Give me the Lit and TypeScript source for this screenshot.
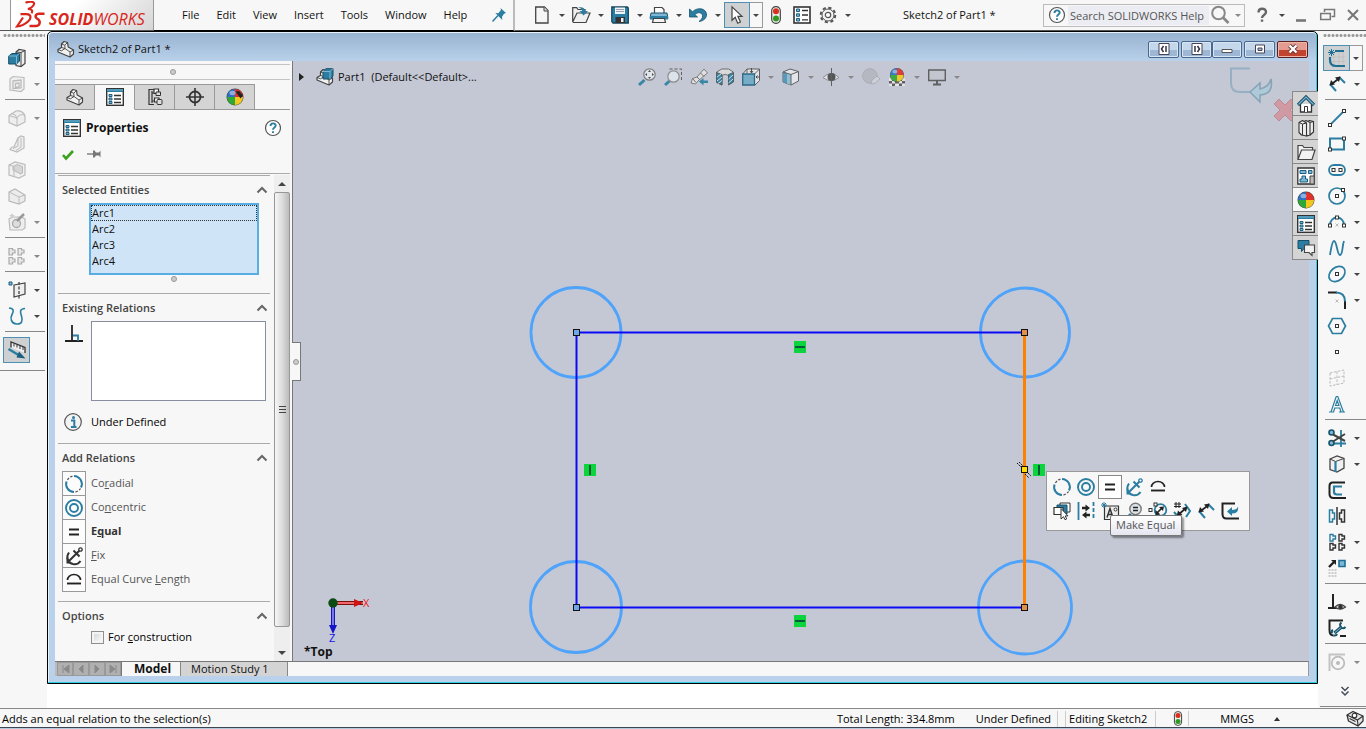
import { LitElement, html, css, svg, nothing } from "lit";
import { customElement, state } from "lit/decorators.js";
import { classMap } from "lit/directives/class-map.js";

const T = "#2b7ea1";
const L = "#7db7d3";
const K = "#333";

const ball = svg`
  <circle cx="9" cy="9" r="8.5" fill="#444"/>
  <path d="M9 9V1A8 8 0 0 0 1 9z" fill="#2d6fc4"/>
  <path d="M9 9V1A8 8 0 0 1 17 9z" fill="#e0302a"/>
  <path d="M9 9H1a8 8 0 0 0 8 8z" fill="#2fa836"/>
  <path d="M9 9h8a8 8 0 0 1-8 8z" fill="#f2c81e"/>
  <ellipse cx="6.5" cy="5" rx="3" ry="2.2" fill="#fff" opacity=".45"/>`;
const propSheet = svg`
  <rect x=".7" y=".7" width="16.6" height="16.6" fill="#fff" stroke="${K}" stroke-width="1.4"/>
  <path d="M1 1h16v3H1z" fill="${T}"/><path d="M1 2h16" stroke="${L}"/>
  <path d="M3 6.5h3v2H3zM3 10h3v2H3zM3 13.5h3v2H3z" fill="${L}" stroke="#1d5f80"/>
  <path d="M8 7.5h7M8 11h7M8 14.5h7" stroke="${K}" stroke-width="1.3"/>`;
const partShape = (x: number) => svg`
  <g transform="translate(${x} 0)" stroke="#444" stroke-linejoin="round">
    <path d="M1 9.500l3.500-2V4L7 1.500l3.500 1 .7 4.500 5.300 3v4L13 17 1 12z" fill="#f1f1f1" stroke-width="1.200"/>
    <path d="M1 9.500l3.500 1.300L8 8.500l5 3.500v5M13 12l3.500-2M4.500 4l3.300 1.200.2 3.300M7.800 5.200l2.700-2.700M4.500 7.500L8 8.500" fill="none" stroke-width=".9"/>
  </g>`;
const dim = (c: string) => svg`
  <path d="M2 9l6 7M11 2l6 6" stroke="${T}" stroke-width="2"/>
  <path d="M3 9.5L11 3.5" stroke="${c}" stroke-width="1.8"/>
  <path d="M1.5 10.5l1.500-5.500 4 4.500zM12.5 1.5l-5.500 1 4 4.500z" fill="${c}"/>`;
const anchor = (c: string) => svg`
  <path d="M4 5.5C.5 10 3 16 8 17c3 .5 6-.6 7.500-3" fill="none" stroke="${c}" stroke-width="2"/>
  <path d="M2.5 15.5L14.5 3.5M8.5 3.5l6 6" stroke="${c}" stroke-width="2"/>
  <circle cx="15.5" cy="2.5" r="1.7" fill="#fff" stroke="${c}" stroke-width="1.3"/>
  <path d="M1.5 16.5v-6l5.500 6z" fill="${c}"/>`;
const sq = (x: number, y: number) =>
  svg`<rect x="${x - 1.5}" y="${y - 1.5}" width="3" height="3" fill="#fff" stroke="${K}"/>`;

const ICONS: Record<string, unknown> = {
  part: partShape(0),
  partBlue: svg`${partShape(0)}<path d="M7 3.500L10 .7h7V8l-3 3H7z" fill="${T}" stroke="#184f68"/><path d="M7 3.500h7L17 .7M14 3.500V11" fill="none" stroke="${L}"/>`,
  sheet: propSheet,
  list: svg`<rect x="1" y="1" width="16" height="16" fill="#fff" stroke="${K}" stroke-width="1.6"/><path d="M3.5 3h3v2.500h-3zM3.5 7.800h3v2.500h-3zM3.5 12.500h3V15h-3z" fill="${L}" stroke="#1d5f80"/><path d="M9 4.500h6M9 9h6M9 13.800h6" stroke="${K}" stroke-width="1.3"/>`,
  config: svg`<path d="M3 1v16M3 1.500h5M3 16.500h5M6 3v12M6 5h3M6 13h4" stroke="${K}" stroke-width="1.200" fill="none"/><path d="M8 1h4.500v4.500H8z" fill="#fff" stroke="${K}" stroke-width="1.200"/><path d="M10 4h4.500v3.500H10z" fill="#ddd" stroke="${K}"/><path d="M8.500 10h4.500v4H8.500z" fill="#fff" stroke="${K}" stroke-width="1.200"/><rect x="11" y="11.500" width="5" height="5" rx="1" fill="#ddd" stroke="${K}"/>`,
  target: svg`<circle cx="9" cy="9" r="5.500" fill="none" stroke="${K}" stroke-width="1.800"/><path d="M9 0v18M0 9h18" stroke="${K}" stroke-width="1.600"/>`,
  appearance: ball,
  appearance2: svg`${ball}<path d="M9.500 3.500L13 3l4 4.500-2.500 3z" fill="#222"/>`,
  help: svg`<circle cx="9" cy="9" r="7.500" fill="#fdfdfd" stroke="#555" stroke-width="1.200"/><path d="M6.500 7c0-3.500 5.200-3.400 5.200-.4C11.700 8.500 9 8.500 9 10.800M9 12.300v1.800" fill="none" stroke="${T}" stroke-width="1.900"/>`,
  ask: svg`<path d="M5.500 6.500C5.500 1.500 13 1.700 13 6c0 3-4 3-4 6M9 13.500v2.300" fill="none" stroke="#666" stroke-width="2.400"/>`,
  info: svg`<circle cx="9" cy="9" r="8.300" fill="#f3f3f3" stroke="#555" stroke-width="1.200"/><path d="M7 7.500h3.300v6M7 14h5.500" stroke="${T}" stroke-width="2" fill="none"/><circle cx="9.500" cy="4.500" r="1.500" fill="${T}"/>`,
  check: svg`<path d="M4 10l3 3.500L14 6" fill="none" stroke="#3aa21f" stroke-width="2.600"/>`,
  pinH: svg`<path d="M2 9h7" stroke="#666" stroke-width="1.200"/><path d="M8 5.500h1.500L11 7.500h3l1.500-2v7l-1.500-2h-3l-1.500 2H8z" fill="#777"/>`,
  pin: svg`<path d="M10.500 2l5.500 5-2 .8-2 3 .3 3.200-7-7 3 .2L11 4z" fill="${T}"/><path d="M2.500 15.500L8 9.500" stroke="${T}" stroke-width="1.500"/>`,
  doc: svg`<path d="M2.700 1h8.800L15 4.500V17H2.700z" fill="#f5f5f5" stroke="#444" stroke-width="1.300"/><path d="M11 1v4h4" fill="#ddd" stroke="#444"/>`,
  open: svg`<path d="M.7 16V1.700h4L6 3.500h7v3M.7 16L5 7h13l-4 9.500H.7" fill="#f0f0f0" stroke="#444" stroke-width="1.200"/><path d="M6 1.500c4-1 7 0 7 3.500h3l-4.500 4.500L7.500 5h2.700C10 3 8.500 2 6 1.500z" fill="${T}"/>`,
  save: svg`<path d="M.8 1h15.500l1 1v15H2L.8 15.500z" fill="${T}" stroke="#17455c" stroke-width="1.300"/><path d="M4 1.500h10V8H4z" fill="#eef4f7"/><path d="M5 3.500h8M5 5.500h8" stroke="#889" stroke-width=".8"/><path d="M4.500 11h9.500v6H4.500z" fill="#333"/><path d="M10 12h2.500v4H10z" fill="#eee"/>`,
  print: svg`<path d="M4.500 7V1.500H12L14 3.500V7" fill="#fff" stroke="#444" stroke-width="1.200"/><path d="M1 7h16l1 5.500H0z" fill="${L}" stroke="#184f68"/><path d="M0 10h18v3.500H0z" fill="${T}"/><path d="M3.500 12.500h11l1 4h-13z" fill="#f4f4f4" stroke="#444" stroke-width="1.200"/>`,
  undo: svg`<path d="M.5 3v8h8L5.800 8.500C9 5.500 13 6.500 13.500 9.500c.4 2.500-1.500 4.500-3.500 6 5-.5 8-4 7.500-7.500C16.500 2 8.500 1 3.500 5.700z" fill="${T}" stroke="#17526c" stroke-width=".8"/>`,
  cursor: svg`<path d="M4 .8v13.500l3.200-3 2.500 5.900 2.700-1.200-2.500-5.700H14z" fill="#fff" stroke="#444" stroke-width="1.200"/>`,
  traffic: svg`<rect x="4.700" y=".7" width="8.600" height="16.600" rx="4" fill="#eee" stroke="#444" stroke-width="1.200"/><circle cx="9" cy="5.300" r="3" fill="#d8301c"/><circle cx="9" cy="12.500" r="3" fill="#2f9a22"/>`,
  gear: svg`<circle cx="9" cy="9" r="7.300" fill="none" stroke="#555" stroke-width="2" stroke-dasharray="3.200 2.540"/><circle cx="9" cy="9" r="6" fill="#f4f4f4" stroke="#555"/><circle cx="9" cy="9" r="2.700" fill="#fff" stroke="#555" stroke-width="1.200"/>`,
  mag: svg`<circle cx="7.500" cy="7" r="6.300" fill="none" stroke="#888" stroke-width="2"/><path d="M12 11.500l5.500 5.500" stroke="#888" stroke-width="2.800"/>`,
  min: svg`<path d="M4 14.500h10" stroke="#777" stroke-width="2.600"/>`,
  restore: svg`<path d="M6.500 6V3.500h10v7h-3" fill="none" stroke="#777" stroke-width="1.500"/><path d="M2.700 7.500h9.600v6H2.700z" fill="none" stroke="#777" stroke-width="1.500"/>`,
  close: svg`<path d="M4 4l10 10M14 4L4 14" stroke="#777" stroke-width="2"/>`,
  zoomFit: svg`<path d="M1 17l5.500-5" stroke="${T}" stroke-width="3"/><circle cx="11.500" cy="6.500" r="5.700" fill="#e4e9ee" stroke="#777" stroke-width="1.200"/><path d="M11.500 2l1.500 2h-3zM11.500 11l1.500-2h-3zM7 6.500L9 5v3zM16 6.500L14 5v3z" fill="#444"/>`,
  zoomArea: svg`<path d="M5.500 1h12v12" fill="none" stroke="#555" stroke-dasharray="3 2"/><path d="M1 17l4.500-4" stroke="${T}" stroke-width="3"/><circle cx="9.500" cy="8.500" r="5.700" fill="#dfe8ee" stroke="#888" stroke-width="1.200"/>`,
  prev: svg`<path d="M1 15l1.500-4.500L7 9l7-8 3.500 4L9 12l-3.500 4z" fill="#e2e2e2" stroke="#777"/><path d="M7 9l3 3M10.500 5l3.500 3.500M2.500 10.500l3.500 4" stroke="#666"/><path d="M9 13.500l4.500-3.500v2.500H18v2.500h-4.500v2.500z" fill="${T}"/>`,
  section: svg`<path d="M.7 4l5-3h7l4.600 3v10l-4.800 2.500V7.500Q9 5 6 7.500V17L.7 14.500z" fill="#ddd" stroke="#666"/><path d="M.7 4.500L6 6.500V17L.7 14.500zM12.500 6.500l4.800-2v9.500l-4.800 3z" fill="${T}" stroke="#444" stroke-width=".8"/><path d="M1 9l4-3M1 13l5-4M2 15.500l4-3M12.500 11l4.500-4M12.500 15l4.500-4" stroke="#cfe4ee"/>`,
  viewCube: svg`<path d="M.7 6L5 1h12.500v11.500L13 17" fill="#e8e8e8" stroke="#555"/><path d="M5 1v4.500M12.500 6L17.500 1" stroke="#555"/><path d="M.7 6h11.800v11H.7z" fill="#6fa9c6" stroke="#1d5f80" stroke-width="1.300"/><path d="M9.500 0v5M8 3l1.500 2L11 3M18 9h-4M15.500 7.500L14 9l1.500 1.500" stroke="#444" fill="none"/>`,
  display: svg`<path d="M1 4l7-3 8.500 2.500V13L9 17 1 14z" fill="#e6eaed" stroke="#555"/><path d="M1 4l4 1.200V15.500L1 14z" fill="#4e93b4"/><path d="M5 5.200l4 1.300V17l-4-1.500z" fill="#8cbdd4"/><path d="M1 4l8 2.500 7.500-3M9 6.500V17" fill="none" stroke="#555"/>`,
  eye: svg`<path d="M1 9.500Q9 1.500 17 9.500Q9 16 1 9.500z" fill="#e2e2e6" stroke="#888"/><circle cx="9.500" cy="9" r="4" fill="#4a4a4a"/><path d="M9.500 0v18" stroke="#555"/>`,
  editAppear: svg`<g opacity=".45"><circle cx="8" cy="8" r="7.300" fill="#a4a4a8" stroke="#888"/><path d="M9 16l1-4 5-4 3 3-5 4.500z" fill="#ddd" stroke="#888"/></g>`,
  scene: svg`<path d="M1 10h16v8H1z" fill="#555"/><path d="M1 10h3v3H1zM14 10h3v3h-3zM4 13h3v2.500H4zM11 13h3v2.500h-3zM1 15.500h3V18H1zM7 15.500h4V18H7zM14 15.500h3V18h-3z" fill="#e8e8e8"/><g transform="translate(1.500 -.5) scale(.83)">${ball}</g>`,
  monitor: svg`<path d="M.7 2h16.600v10.500H.7z" fill="#c3c6ce" stroke="#555" stroke-width="1.400"/><path d="M9 12.500V16M5 16.500h8" stroke="#555" stroke-width="2"/>`,
  extrude: svg`<path d="M8 3l3-2.500 6 1v13l-4 3-5-1z" fill="#eee" stroke="#444" stroke-width="1.200"/><path d="M13 3.500v14M8 3l5 .5L17 1.500" fill="none" stroke="#444"/><path d="M.7 7L4 4.500h7.500V12l-3 3H.7z" fill="${T}" stroke="#184f68"/><path d="M.7 7h7.800l3-2.500M8.500 7v8" fill="none" stroke="${L}"/>`,
  cutDis: svg`<path d="M2 4l3-2.500 11 1V14l-3 2.500L2 15z" fill="#f0f0f0" stroke="#bbb" stroke-width="1.200"/><path d="M5 6l8-1v8l-8 .5zM7.500 8.500l3.500-.5v4l-3.500.5z" fill="none" stroke="#bbb" stroke-width="1.300"/>`,
  filletDis: svg`<path d="M1 6.500L8 2q7-1 9 5v6l-8 4-8-3.500z" fill="#eee" stroke="#bbb" stroke-width="1.200"/><path d="M1 6.500l8 2.500v8M9 9q2-4.500 8-3M3.500 4.500Q8 5 9 9" fill="none" stroke="#bbb"/>`,
  ribDis: svg`<path d="M10 3l3-2 3 1v11l-7 4-7-2.500L4 12h2z" fill="#eee" stroke="#bbb" stroke-width="1.200"/><path d="M10 3v8l-5 2.500M13 3v9l-5 3.500" fill="none" stroke="#bbb"/>`,
  shellDis: svg`<path d="M1 4l6-3 10 2.500V14l-6 3-10-3z" fill="#f0f0f0" stroke="#bbb" stroke-width="1.200"/><path d="M5 5.500L9 3.500l5.500 2V12l-2 1L5 9z" fill="#d5d5d5" stroke="#bbb"/><path d="M1 4l5 1.500v10" fill="none" stroke="#bbb"/>`,
  draftDis: svg`<path d="M1 5l6-3 10 6v6l-6 3-10-3z" fill="#ececec" stroke="#b8b8b8" stroke-width="1.200"/><path d="M1 5l10 5v7M11 10l6-2" fill="none" stroke="#bbb"/>`,
  camDis: svg`<path d="M1 6l3-2h10l3 2v9l-3 2H2z" fill="#eee" stroke="#bbb" stroke-width="1.200"/><circle cx="8.500" cy="10.500" r="4" fill="#ddd" stroke="#aaa" stroke-width="1.300"/><path d="M9 8l7-7" stroke="#999" stroke-width="2.500"/><path d="M4 0l1 2 2 .5-2 1-1 2-1-2-2-1L3 2z" fill="#ccc"/>`,
  patDis: svg`<g fill="#e8e8e8" stroke="#aaa" stroke-width="1.200"><path d="M1 1.500h3.500V3H7v3H4.500v2H1zM10 1.500h3.500V3H16v3h-2.500v2H10z"/><path d="M1 10.500h3.500V12H7v3H4.500v2H1zM10 10.500h3.500V12H16v3h-2.500v2H10z"/></g>`,
  plane: svg`<path d="M6 4l11-2v11L6 16z" fill="#eee" stroke="#444" stroke-width="1.200"/><path d="M11 1v17" stroke="#444" stroke-dasharray="3 1.500" stroke-width="1.300"/><path d="M1 1h3v3H1z" fill="${L}" stroke="#1d5f80"/>`,
  curve: svg`<path d="M1 1c5 .5 5 3 3 6.500S3 16.500 8.500 17s6.500-3.500 5-8S11.500 2 17 1.500" fill="none" stroke="${T}" stroke-width="1.600"/>`,
  ruler: svg`<path d="M3 6.500V1l14 5.500V12" fill="#eee" stroke="#333" stroke-width="1.300"/><path d="M6 2.500v3M9 3.500v3M12 5v3M15 6v3" stroke="#333"/><path d="M.5 8l10 6" stroke="${T}" stroke-width="2.600"/><path d="M11 10.500l6.500 7-9-1z" fill="#1d5f80"/>`,
  sketch: svg`<path d="M6 3v14M11 3v14M15 3v14M1 8h16M1 12.500h16" stroke="#bbb" stroke-width=".6"/><path d="M16 2H7M2 8v3c0 4 2 6 6 6h9" fill="none" stroke="#1d6f93" stroke-width="2.200"/><path d="M3.500 0v7M0 3.500h7M1 1l5 5M6 1L1 6" stroke="#1d6f93"/>`,
  dim: dim("#222"),
  line: svg`<path d="M2 16L16 2" stroke="${T}" stroke-width="1.800"/>${sq(2, 16)}${sq(16, 2)}`,
  rect: svg`<path d="M2 3.500h14v11H2z" fill="none" stroke="${T}" stroke-width="2"/>${sq(2, 14.5)}${sq(16, 3.5)}`,
  slot: svg`<rect x="1" y="4" width="16" height="10" rx="5" fill="none" stroke="${T}" stroke-width="1.800"/>${sq(5.5, 9)}${sq(12.5, 9)}`,
  circle: svg`<circle cx="9" cy="9" r="8" fill="none" stroke="${T}" stroke-width="1.700"/>${sq(9, 9)}${sq(15, 3)}`,
  arc: svg`<path d="M2 12a7 7.500 0 0 1 14 0" fill="none" stroke="${T}" stroke-width="1.800"/>${sq(2, 12.5)}${sq(16, 12.5)}${sq(9, 4.5)}<path d="M7.500 10.500l3 3M10.500 10.500l-3 3" stroke="#bbb"/>`,
  spline: svg`<path d="M2 16C3 10 4 2 6 2c3 0 3 14 6 14s2-9 4-14" fill="none" stroke="${T}" stroke-width="1.800"/>`,
  ellipse: svg`<ellipse cx="9" cy="9" rx="9" ry="6.500" transform="rotate(-40 9 9)" fill="none" stroke="${T}" stroke-width="1.700"/>${sq(9, 9)}`,
  fillet: svg`<path d="M0 1.500h9M17 10v8" stroke="#222" stroke-width="2"/><path d="M8 1.500q9 0 9 9" fill="none" stroke="${T}" stroke-width="2"/><path d="M7.500 8.500l3 3M10.500 8.500l-3 3" stroke="#bbb"/>`,
  polygon: svg`<path d="M4.500 1.500h9L17.500 9l-4 7.500h-9L.5 9z" fill="none" stroke="${T}" stroke-width="1.700"/>${sq(9, 9)}`,
  point: sq(9, 9),
  planeDis: svg`<path d="M2 4l14-3v13L2 17zM9 2.500V16M2 10l14-3" fill="none" stroke="#bbb" stroke-dasharray="2.500 1.500"/>`,
  text: svg`<path d="M1 17h5M11 17h6M3 17L8.200 1.500h1.600L15.500 17M5.500 17l1.300-4h5l1.200 4M7.500 10.500L9.200 5.500l1.700 5z" fill="none" stroke="${T}" stroke-width="1.200"/>`,
  trim: svg`<path d="M13 1v17M1 14.500h17" stroke="${T}" stroke-width="1.800"/><circle cx="3.500" cy="3.500" r="2.500" fill="${L}" stroke="#17526c" stroke-width="1.600"/><circle cx="3.500" cy="14" r="2.500" fill="${L}" stroke="#17526c" stroke-width="1.600"/><path d="M5 5.500L17 12M5 12.500L17 5" stroke="#444" stroke-width="2"/>`,
  convert: svg`<path d="M2 4l7-3 7 2.500V13l-7 4-7-2.500z" fill="#f0f0f0" stroke="#444" stroke-width="1.300"/><path d="M2 4l5.500 2.500L16 3.500M7.500 6.500V17" fill="none" stroke="#444"/><path d="M7.500 6.500V17" stroke="${T}" stroke-width="2.200"/>`,
  offset: svg`<path d="M17 1.500H4.500Q1.500 1.500 1.500 5v8q0 4 4 4H18" fill="none" stroke="#222" stroke-width="2"/><path d="M14 5.500H6V11q0 2.500 3 2.500h5" fill="none" stroke="${T}" stroke-width="2.200"/>`,
  mirror: svg`<path d="M9 0v18" stroke="#333" stroke-width="1.500"/><path d="M1.500 3h3v3h2v6h-2v3h-3z" fill="none" stroke="${T}" stroke-width="1.500"/><path d="M16.500 3h-3v3h-2v6h2v3h3z" fill="none" stroke="#333" stroke-width="1.500"/>`,
  pattern: svg`<path d="M2 1.500h3V3h2.500v3H5v2H2z" fill="none" stroke="${T}" stroke-width="1.400"/><path d="M11 1.500h3V3h2.500v3H14v2h-3zM2 10.500h3V12h2.500v3H5v2H2zM11 10.500h3V12h2.500v3H14v2h-3z" fill="none" stroke="#333" stroke-width="1.400"/>`,
  move: svg`<path d="M1 8l5-5" stroke="#222" stroke-width="2.400"/><path d="M3 1h5v5z" fill="#222"/><path d="M11 1.500h6v6h-6z" fill="${L}" stroke="#1d6f93" stroke-width="1.600"/><path d="M.5 11h8M.5 14h8M.5 17h8" stroke="#ccc" stroke-width="2" stroke-dasharray="2 1"/>`,
  relEye: svg`<path d="M5 1v14M0 15h9" stroke="#222" stroke-width="2"/><path d="M7 14q5-5 10.500 0-5.500 4.500-10.500 0z" fill="#ddd" stroke="#444" stroke-width="1.200"/><circle cx="12.500" cy="14" r="2.300" fill="#333"/>`,
  repair: svg`<path d="M15 1.500H1.500V11q0 5.500 4 5.500M12 17h6" fill="none" stroke="#222" stroke-width="2"/><path d="M6.500 14l7-6" stroke="#17526c" stroke-width="3.400"/><path d="M13.500 3.500q-2.500 2-.5 4.500t4.500 0M5 11q-2 1-1 3.500M5.500 16.500q3 .5 3.500-1.500" stroke="#17526c" stroke-width="2" fill="none"/><path d="M7 13.500l6-5" stroke="${L}"/>`,
  snapDis: svg`<path d="M1.500 18V1.500H17" fill="none" stroke="#c4c4c4" stroke-width="2"/><circle cx="10" cy="10" r="6.300" fill="none" stroke="#bbb" stroke-width="1.700"/><circle cx="10" cy="10" r="2" fill="#bbb"/>`,
  more: svg`<path d="M5.500 5L9 8.500 12.500 5M5.500 9.500L9 13l3.500-3.500" fill="none" stroke="#444a55" stroke-width="1.500"/>`,
  home: svg`<path d="M3.500 9v8h11V9" fill="#fff" stroke="#333" stroke-width="1.300"/><path d="M1 10l8-8 8 8" fill="none" stroke="#174f69" stroke-width="3.200"/><path d="M1.500 9.500L9 2l7.500 7.500" fill="none" stroke="${L}" stroke-width="1.200"/><path d="M7.500 17v-5.500h3V17" fill="#fff" stroke="#333"/>`,
  library: svg`<g fill="#eee" stroke="#333" stroke-width="1.100" stroke-linejoin="round"><path d="M9 3.500L12.500 1.500 16.500 2.500V13L13 16z"/><path d="M5.500 3.500L9 1.500l4 2V16l-3 1z"/><path d="M2 3.500L5.500 1.500l4 2.500V17L4.500 16 2 13.500z"/></g><path d="M2 3.500l3.500 1.500V16M5.500 5l4-1M13 3.500l3.500-1" stroke="#333" fill="none"/>`,
  folder: svg`<path d="M1 16.500V2.500h4.500L7 4.500h8.500V7M1 16.500L4.500 7H18l-3 9.500z" fill="#f2f2f2" stroke="#444" stroke-width="1.200"/>`,
  palette: svg`<path d="M.8 1h16.400v16H.8z" fill="#fff" stroke="#333" stroke-width="1.300"/><path d="M3 3.500h6v3H3zM11.500 3.500h3.500v3h-3.500zM5 9h3.500v3h2v3H3v-3h2z" fill="${L}" stroke="#1d5f80"/><path d="M13 9h4.200v8H13z" fill="#bbb" stroke="#444"/>`,
  forum: svg`<path d="M1 1.500h11v8H7L4.500 12.500V9.500H1z" fill="${T}" stroke="#174f69"/><path d="M7.500 6h10v7.500H15v3L12 13.500H7.500z" fill="#f1f1f1" stroke="#444" stroke-width="1.100"/>`,
  coradial: svg`<path d="M9 1a8 8 0 0 1 7 11.500M9 17A8 8 0 0 1 1.500 6.500" fill="none" stroke="${T}" stroke-width="2"/><path d="M2.500 5A8 8 0 0 1 7.500 1M10.500 17A8 8 0 0 0 15.500 13.500" fill="none" stroke="#555" stroke-width="1.300" stroke-dasharray="2.500 1.500"/>`,
  concentric: svg`<circle cx="9" cy="9" r="8" fill="none" stroke="${T}" stroke-width="1.900"/><circle cx="9" cy="9" r="4" fill="none" stroke="${T}" stroke-width="1.900"/>`,
  equal: svg`<path d="M4 6.500h10M4 11.500h10" stroke="#222" stroke-width="2"/>`,
  fix: anchor("#333"),
  fixBlue: anchor(T),
  eqCurve: svg`<path d="M2.500 9a6.500 5.500 0 0 1 13 0" fill="none" stroke="#222" stroke-width="1.700"/><path d="M2 12.500h14" stroke="#222" stroke-width="1.900"/>`,
  perp: svg`<path d="M7 0v17" stroke="#222" stroke-width="1.800"/><path d="M0 16h18" stroke="#222" stroke-width="2"/><path d="M8 10.500h5V16" fill="none" stroke="${T}" stroke-width="1.800"/>`,
  selectOther: svg`<path d="M7 1h10v9H7z" fill="#fff" stroke="#333"/><path d="M4 3h10v9H4z" fill="${T}" stroke="#174f69"/><path d="M1 5.500h9v7H1z" fill="#fff" stroke="#333" stroke-width="1.200"/><path d="M8 6.500V17l2.500-2.300 1.500 3 1.700-.8-1.500-3H15z" fill="#fff" stroke="#333"/>`,
  makeDim: svg`<path d="M1.500 0v18" stroke="${T}" stroke-width="1.800"/><path d="M16.500 0v18" stroke="${T}" stroke-width="1.800" stroke-dasharray="4 2"/><path d="M5 6h4M9 13h4" stroke="#222" stroke-width="2.400"/><path d="M8.500 2.500v7l4.500-3.500zM9.500 9.500v7L5 13z" fill="#222"/>`,
  note: svg`<path d="M3.500 4h14v13.500h-14z" fill="#eee" stroke="#333" stroke-width="1.200"/><path d="M3 0v6M0 3h6M1 1l4 4M5 1L1 5" stroke="${T}"/><path d="M6 15.500l3-9 3 9M7 12.500h4" fill="none" stroke="#333" stroke-width="1.500"/><circle cx="14.500" cy="7.500" r="1.500" fill="#fff" stroke="#333"/>`,
  zoomSel: svg`<path d="M1 17l5-5" stroke="${T}" stroke-width="3"/><circle cx="10.500" cy="7" r="5.700" fill="#dde3e8" stroke="#777" stroke-width="1.400"/><path d="M8 5.500h5M8 8.500h5" stroke="#222" stroke-width="1.700"/>`,
  autoDim: svg`<circle cx="11.500" cy="8" r="5.800" fill="none" stroke="${T}" stroke-width="1.800"/>${sq(1.5, 8)}${sq(6.5, 2.5)}<path d="M8 11l5-5" stroke="#222" stroke-width="1.600"/><path d="M6.500 13V8l5 4.500zM15 4.500L10 5l4 4z" fill="#222"/>`,
  fullDim: svg`<path d="M3 0v6M6 0v6M1 2h7M1 4.500h7" stroke="#222"/><path d="M1 10l5 6M12 2l5 7-4 6" stroke="${T}" stroke-width="2" fill="none"/><path d="M5 13l8-7" stroke="#222" stroke-width="1.800"/><path d="M3.500 14.500L5 8.500l4.500 4.500zM14.500 4.500L9 6l4 4z" fill="#222"/>`,
  exitSketch: svg`<path d="M14 1.500H1.500V12q0 4.500 4 4.500H18" fill="none" stroke="#222" stroke-width="2"/><path d="M6 9.500L11 5v3q5 0 6-3.500 1 7-6 7V14z" fill="${T}"/>`,
  rebuild: svg`<path d="M1 5l6-3.500L17 6v5l-5 5L2.500 11z" fill="#e8e8e8" stroke="#333" stroke-width="1.300" stroke-linejoin="round"/><path d="M1 5l10.500 5L17 6M11.500 10l.5 6M3.500 8.500l6 3" fill="none" stroke="#333" stroke-width="1.100"/><circle cx="8.500" cy="5.500" r="2.300" fill="#fff" stroke="#333" stroke-width="1.200"/>`,
};

const icon = (name: string) =>
  html`<svg class="ico" width="18" height="18" viewBox="0 0 18 18" aria-hidden="true">${ICONS[name]}</svg>`;

interface Tool {
  icon: string;
  label: string;
  menu?: boolean;
  active?: boolean;
  off?: boolean;
}
const t = (i: string, label: string, flags = ""): Tool => ({
  icon: i,
  label,
  menu: flags.includes("m"),
  active: flags.includes("a"),
  off: flags.includes("d"),
});
const SEP = null;

const MAIN_TOOLS = [
  t("doc", "New", "m"), t("open", "Open", "m"), t("save", "Save", "m"), t("print", "Print", "m"),
  t("undo", "Undo", "m"), t("cursor", "Select", "ma"), t("traffic", "Rebuild"),
  t("list", "File Properties"), t("gear", "Options", "m"),
];
const FEATURE_TOOLS = [
  t("extrude", "Extruded Boss", "m"), t("cutDis", "Extruded Cut", "md"), SEP,
  t("filletDis", "Fillet", "md"), t("ribDis", "Rib", "d"), t("shellDis", "Shell", "d"),
  t("draftDis", "Draft", "d"), t("camDis", "Hole Wizard", "md"), SEP,
  t("patDis", "Linear Pattern", "md"), SEP,
  t("plane", "Reference Geometry", "m"), t("curve", "Curves", "m"), SEP,
  t("ruler", "Instant3D", "a"),
];
const SKETCH_TOOLS = [
  t("sketch", "Sketch", "ma"), t("dim", "Smart Dimension", "m"), SEP,
  t("line", "Line", "m"), t("rect", "Rectangle", "m"), t("slot", "Slot", "m"), t("circle", "Circle", "m"),
  t("arc", "Arc", "m"), t("spline", "Spline", "m"), t("ellipse", "Ellipse", "m"), t("fillet", "Sketch Fillet", "m"),
  t("polygon", "Polygon"), t("point", "Point"), t("planeDis", "Plane", "d"), t("text", "Text"), SEP,
  t("trim", "Trim Entities", "m"), t("convert", "Convert Entities", "m"), t("offset", "Offset Entities"),
  t("mirror", "Mirror Entities"), t("pattern", "Linear Sketch Pattern", "m"), t("move", "Move Entities", "m"), SEP,
  t("relEye", "Display Relations", "m"), t("repair", "Repair Sketch"), SEP,
  t("snapDis", "Quick Snaps", "md"),
];
const VIEW_TOOLS = [
  t("zoomFit", "Zoom to Fit"), t("zoomArea", "Zoom to Area"), t("prev", "Previous View"), t("section", "Section View"),
  t("viewCube", "View Orientation", "m"), t("display", "Display Style", "m"), t("eye", "Hide/Show Items", "m"),
  t("editAppear", "Edit Appearance"), t("scene", "Apply Scene", "m"), t("monitor", "View Settings", "m"),
];
const RELATIONS: [string, string, string, string][] = [
  ["coradial", "Co", "r", "adial"],
  ["concentric", "Co", "n", "centric"],
  ["equal", "E", "q", "ual"],
  ["fix", "", "F", "ix"],
  ["eqCurve", "Equal Curve ", "L", "ength"],
];
const CONTEXT: [string, string][][] = [
  [["coradial", "Coradial"], ["concentric", "Concentric"], ["equal", "Make Equal"], ["fixBlue", "Fix"], ["eqCurve", "Equal Curve Length"]],
  [["selectOther", "Select Other"], ["makeDim", "Dynamic Mirror"], ["note", "Note"], ["zoomSel", "Zoom to Selection"],
   ["autoDim", "Auto Dimension"], ["fullDim", "Fully Define"], ["dim", "Smart Dimension"], ["exitSketch", "Exit Sketch"]],
];

@customElement("app-root")
export class AppRoot extends LitElement {
  @state() private construction = false;

  static styles = css`
    :host {
      display: grid;
      grid-template: 31px minmax(0, 1fr) 19px 2px / 47px minmax(0, 1fr) 48px;
      height: 100vh;
      min-height: 720px;
      overflow: hidden;
      background: #f7f7f7;
      color: #111;
      font: 11px/16px "Open Sans", "Noto Sans", sans-serif;
    }
    * { box-sizing: border-box; }
    button, input { font: inherit; color: inherit; }
    button { display: inline-flex; align-items: center; justify-content: center; margin: 0; padding: 0; border: 0; background: none; }
    ul { list-style: none; margin: 0; padding: 0; }
    .ico { display: block; flex: none; overflow: visible; }
    .row { display: flex; align-items: center; }

    /* application bar */
    .top { grid-column: 1 / -1; display: flex; align-items: stretch; border-bottom: 1px solid #555; white-space: nowrap; }
    .brand { display: flex; align-items: center; width: 144px; margin-left: 10px; padding-left: 4px; border: solid #999; border-width: 0 1px; background: linear-gradient(135deg, #fff 40%, #d6d6d6); color: #d9261c; }
    .brand svg { flex: none; }
    .word { font-size: 16px; line-height: 20px; font-style: italic; padding: 8px 0 0 2px; }
    .menus { display: flex; align-items: center; gap: 17px; width: 361px; padding-left: 28px; border-bottom: 1px solid #000; border-right: 2px solid #bbb; margin-bottom: -1px; }
    .menus .ico { margin-left: 6px; }
    .tools { display: flex; align-items: center; padding-left: 14px; }
    .ibtn { width: 26px; height: 26px; }
    .abtn { width: 13px; height: 26px; }
    .abtn::before { content: ""; border: solid transparent; border-width: 3px 3px 0; border-top-color: #444; }
    .off .abtn::before { border-top-color: #888; }
    .active .ibtn { background: #cfd0d2; border: 1px solid #4d8fb5; }
    .active .abtn { border: 1px solid #999; border-left: 0; }
    .doc { margin-left: 49px; }
    .right { display: flex; align-items: center; margin-left: auto; }
    .search { display: flex; align-items: center; gap: 2px; width: 202px; height: 23px; margin: 0 4px 0 8px; padding-left: 4px; border: 1px solid #bbb; }
    .search input { flex: 1; min-width: 0; width: 0; height: 19px; padding: 0 2px; border: 0; outline: 0; background: #ecedf2; }
    .search input::placeholder { color: #555; opacity: 1; }
    .search .abtn::before { border-top-color: #888; }

    /* side toolbars */
    .side { display: flex; flex-direction: column; padding: 3px 2px 0 3px; }
    .side::before { content: ""; height: 3px; margin-bottom: 8px; background: radial-gradient(circle, #999 1px, transparent 2px) 0 0 / 4px 3px; }
    .side.r { padding: 3px 0 0 5px; }
    .side .slot { display: flex; height: 26px; }
    .side .ibtn { width: 27px; }
    .side hr { height: 1px; margin: 2px 0 5px 2px; border: 0; background: #888; flex: none; width: auto; }
    .side .after { margin-top: 7px; margin-left: -3px; }
    .side .more { height: 32px; }
    .side.r .last { margin: -1px 0 0 -3px; }

    /* document window */
    .desk { background: #fff; padding-bottom: 24px; min-width: 0; }
    .win { position: relative; display: flex; flex-direction: column; height: 100%; border: 1px solid #000; border-radius: 5px 5px 0 0; background: #b9d1ea; box-shadow: inset -1px -1px #2fd0e4, inset 1px 1px #e8f2fb; padding: 0 8px 7px 7px; }
    .bar { display: flex; align-items: center; height: 28px; flex: none; margin: 1px -7px 0 -6px; padding: 4px 8px 0 8px; background: linear-gradient(#98b3d1, #b9d1ea); border-radius: 4px 4px 0 0; }
    .bar .name { padding-left: 3px; margin-right: auto; }
    .wbtn { width: 31px; height: 17px; margin-left: 2px; border: 1px solid #49688f; border-radius: 2px; background: linear-gradient(#c5d7eb 50%, #9db7d5 50%); box-shadow: inset 0 0 0 1px #d8e6f4; }
    .wbtn.join { margin-left: 0; width: 30px; }
    .wbtn.x { border-color: #5b1f1f; background: linear-gradient(#e39c8f 50%, #c0432f 50%); box-shadow: inset 0 0 0 1px #edb6ac; }
    .work { display: flex; flex: 1; min-height: 0; }

    /* property manager */
    .pm { position: relative; width: 238px; flex: none; display: flex; flex-direction: column; background: #f7f7f7; border-right: 1px solid #777; }
    .grip { height: 16px; margin: 3px 2px 4px 0; border: solid #c4c4c4; border-width: 1px 0; flex: none; display: flex; align-items: center; justify-content: center; }
    .dot { width: 6px; height: 6px; border: 1px solid #999; border-radius: 50%; background: #ccc; }
    .tabs { display: flex; height: 26px; flex: none; margin-right: 2px; border-bottom: 1px solid #999; }
    .tabs button { width: 40px; height: 26px; background: #d4d4d4; border: solid #999; border-width: 1px 1px 1px 0; }
    .tabs .on { background: #f7f7f7; border-bottom-color: #f7f7f7; }
    .head { display: flex; align-items: center; height: 35px; padding: 0 10px 0 8px; font-size: 12px; font-weight: 700; }
    .head span { flex: 1; padding-left: 5px; }
    .acts { display: flex; align-items: center; gap: 8px; height: 29px; padding: 0 0 10px 4px; margin-right: 2px; border-bottom: 1px solid #aaa; }
    .scroll { flex: 1; min-height: 0; display: flex; padding-top: 1px; }
    .secs { flex: 1; min-width: 0; padding: 0 4px 0 3px; overflow: hidden; }
    .sec { border-top: 1px solid #aaa; }
    .sec h2 { display: flex; align-items: center; justify-content: space-between; height: 27px; margin: 0; padding: 0 2px 0 4px; font-size: 11px; font-weight: 600; line-height: 16px; color: #444; }
    .ents { height: 72px; margin: 0 11px 0 31px; border: 2px solid #58ade4; background: #cfe4f7; }
    .ents li { height: 16px; line-height: 14px; border: 1px solid transparent; }
    .ents li:first-child { border: 1px dotted #333; }
    .mid { display: flex; justify-content: center; padding: 1px 0 0 20px; height: 18px; }
    .exist { display: grid; grid-template-columns: 29px 1fr; padding: 0 4px; height: 80px; }
    .exist .ico { margin: 4px 0 0 3px; }
    .box { border: 1px solid #868ea0; background: #fff; }
    .info { display: flex; align-items: center; gap: 9px; height: 42px; padding-left: 6px; color: #000; }
    .rels { display: flex; flex-direction: column; padding: 0 0 10px 4px; }
    .rels button { justify-content: flex-start; gap: 5px; height: 24px; color: #555; }
    .rels i { display: flex; align-items: center; justify-content: center; width: 24px; height: 25px; margin-bottom: -1px; border: 1px solid #999; background: #fcfcfc; }
    .rels .hot { font-weight: 700; color: #333; }
    .chk { display: flex; align-items: center; gap: 4px; height: 16px; padding-left: 33px; color: #000; }
    .chk input { appearance: none; width: 13px; height: 13px; margin: 0; border: 1px solid #8e8f8f; background: linear-gradient(135deg, #cdd1d6, #fff); box-shadow: inset 0 0 0 2px #f4f4f4; }
    .chk input:checked { background: #2b7ea1; }
    .sb { width: 16px; margin-right: 2px; display: flex; flex-direction: column; background: #eee; }
    .sb button { height: 17px; }
    .sb button::before { content: ""; border: 4px solid transparent; border-top: 0; border-bottom-color: #444; }
    .sb .down { margin-top: 17px; }
    .sb .down::before { border: 4px solid transparent; border-bottom: 0; border-top-color: #444; }
    .thumb { flex: 1; border: 1px solid #979797; border-radius: 2px; background: linear-gradient(90deg, #f6f6f6, #ddd 50%, #bbb); display: flex; align-items: center; justify-content: center; }
    .thumb::before { content: ""; width: 7px; height: 8px; background: repeating-linear-gradient(#444 0 1px, transparent 1px 3px); }
    .split { position: absolute; left: 237px; top: 281px; width: 9px; height: 39px; border: 1px solid #777; border-left: 0; background: #f7f7f7; display: flex; align-items: center; justify-content: center; z-index: 1; }

    /* graphics area */
    .view { position: relative; flex: 1; min-width: 0; background: #c4c8d4; }
    .sketch { position: absolute; inset: 0; width: 100%; height: 100%; }
    .hud { position: relative; display: grid; grid-template-columns: minmax(0, 1fr) auto minmax(0, 1fr); align-items: center; height: 32px; padding-right: 4px; white-space: nowrap; }
    .tree { display: flex; align-items: center; padding-left: 6px; }
    .tree::before { content: ""; border: 4px solid transparent; border-left: 5px solid #222; border-right: 0; margin-right: 12px; }
    .tree .ico { margin-right: 4px; }
    .hud .abtn { width: 14px; }
    .hud .abtn::before { border-top-color: #888; }
    .hud .row .ico { opacity: 0.9; }
    .topname { position: absolute; left: 11px; bottom: 1px; font-size: 12px; font-weight: 700; }
    .corner { position: absolute; right: 0; top: 4px; }
    .task { position: absolute; right: -9px; top: 30px; display: flex; flex-direction: column; background: #d4d4d4; border: solid #888; border-width: 1px 0 0 1px; }
    .task button { width: 25px; height: 24px; border-bottom: 1px solid #888; }
    .task .on { background: #f7f7f7; }
    .ctx { position: absolute; left: 753px; top: 410px; padding: 3px 7px 7px 3px; border: 1px solid #999; background: #f7f7f7; }
    .ctx .row { height: 24px; }
    .ctx button { width: 24px; height: 24px; }
    .ctx .hot { border: 1px solid #888; background: #fff; }
    .tip { position: absolute; left: 63px; top: 43px; padding: 1px 6px 2px 5px; border: 1px solid #777; border-radius: 2px; background: linear-gradient(#fff, #e4e5f0); box-shadow: 2px 2px 2px #0006; color: #555; white-space: nowrap; }

    /* model tabs */
    .btabs { display: flex; height: 15px; flex: none; border-top: 1px solid #777; border-right: 1px solid #999; background: #f7f7f7; }
    .nav { display: flex; padding-left: 2px; border-right: 1px solid #777; background: #bbb; }
    .nav button { width: 16px; border: 1px solid #999; background: #b0b0b0; }
    .btabs .tab { align-items: flex-start; line-height: 13px; }
    .btabs .model { font-size: 12px; font-weight: 700; padding: 0 9px 0 12px; }
    .btabs .motion { background: #d4d4d4; border: solid #888; border-width: 0 1px; padding: 0 18px 0 10px; }

    /* status bar */
    .status { grid-column: 1 / -1; display: flex; align-items: center; border-top: 1px solid #888; padding: 1px 2px 0; color: #000; white-space: nowrap; }
    .status .msg { margin-right: auto; }
    .status .len { margin-right: 21px; }
    .status .def { padding-right: 6px; border-right: 1px solid #ccc; }
    .status .ed { margin-left: 7px; padding: 0 8px 0 3px; border: solid #ccc; border-width: 0 1px; }
    .status .lights { padding: 0 1px 0 13px; border-right: 1px solid #ccc; }
    .status .lights .ico { height: 15px; }
    .status .units { padding: 0 20px 0 31px; }
    .status .up { border: 3px solid transparent; border-top: 0; border-bottom: 4px solid #333; margin-right: 66px; }
    .taskbar { grid-column: 1 / -1; background: linear-gradient(#3c4652 50%, #b5c9dc 50%); }
  `;

  private tool(x: Tool) {
    return html`<div class=${classMap({ slot: true, row: true, active: !!x.active, off: !!x.off })}>
      <button class="ibtn" aria-label=${x.label} ?disabled=${x.off}>${icon(x.icon)}</button>${x.menu
        ? html`<button class="abtn" aria-label="${x.label} menu"></button>`
        : nothing}
    </div>`;
  }

  private section(title: string, body: unknown) {
    return html`<section class="sec">
      <h2>
        <span>${title}</span>
        <svg width="12" height="8" viewBox="0 0 12 8" aria-hidden="true"><path d="M1.5 6.5L6 2l4.500 4.500" fill="none" stroke="#666" stroke-width="2" /></svg>
      </h2>
      ${body}
    </section>`;
  }

  private get topBar() {
    return html`<header class="top">
      <div class="brand">
        <svg width="32" height="29" viewBox="0 0 32 29" fill="none" stroke="#d9261c" aria-hidden="true">
          <path d="M10.500 1.800C14 .3 20 .2 19 3.200c-.6 2-3.500 3.800-6 4.800 4 0 5 1.500 3.500 4.200" stroke-width="2.100" />
          <path d="M5.500 13.200h6c5 .2 5 4 1.500 7.300-3 2.800-6.500 4.500-11 5L8 16.500" stroke-width="2.200" />
          <path d="M29.500 12.700h-5.500c-3.500 0-4.500 3.200-2 4.800 4.500 2.500 3 7.500-1.500 7.500h-6" stroke-width="2.500" />
        </svg>
        <span class="word"><b>SOLID</b>WORKS</span>
      </div>
      <nav class="menus">
        ${["File", "Edit", "View", "Insert", "Tools", "Window", "Help"].map((m) => html`<button>${m}</button>`)}
        ${icon("pin")}
      </nav>
      <div class="tools">${MAIN_TOOLS.map((x) => this.tool(x))}</div>
      <span class="doc row">Sketch2 of Part1 *</span>
      <div class="right">
        <div class="search">
          ${icon("help")}
          <input aria-label="Search help" placeholder="Search SOLIDWORKS Help" />
          ${icon("mag")}<button class="abtn" aria-label="Search options"></button>
        </div>
        <button class="ibtn" aria-label="Help">${icon("ask")}</button>
        <button class="abtn" aria-label="Help menu"></button>
        <button class="ibtn" aria-label="Minimize">${icon("min")}</button>
        <button class="ibtn" aria-label="Restore">${icon("restore")}</button>
        <button class="ibtn" aria-label="Close">${icon("close")}</button>
      </div>
    </header>`;
  }

  private get propertyManager() {
    return html`<aside class="pm">
      <div class="grip"><span class="dot"></span></div>
      <div class="tabs">
        ${[["part", "Feature tree"], ["sheet", "Properties"], ["config", "Configurations"], ["target", "DimXpert"], ["appearance2", "Display"]].map(
          ([i, l]) => html`<button class=${i === "sheet" ? "on" : ""} aria-label=${l}>${icon(i)}</button>`
        )}
      </div>
      <div class="head">${icon("sheet")}<span>Properties</span><button aria-label="Help">${icon("help")}</button></div>
      <div class="acts">
        <button aria-label="OK">${icon("check")}</button><button aria-label="Keep visible">${icon("pinH")}</button>
      </div>
      <div class="scroll">
        <div class="secs">
          ${this.section("Selected Entities", html`
            <ul class="ents" role="listbox" aria-label="Selected Entities">
              ${["Arc1", "Arc2", "Arc3", "Arc4"].map((a) => html`<li role="option" aria-selected="true">${a}</li>`)}
            </ul>
            <div class="mid"><span class="dot"></span></div>`)}
          ${this.section("Existing Relations", html`
            <div class="exist">${icon("perp")}<div class="box" role="listbox" aria-label="Existing Relations"></div></div>
            <div class="info">${icon("info")}Under Defined</div>`)}
          ${this.section("Add Relations", html`
            <div class="rels">
              ${RELATIONS.map(([i, a, u, b]) => html`<button class=${i === "equal" ? "hot" : ""}><i>${icon(i)}</i><span>${a}<u>${u}</u>${b}</span></button>`)}
            </div>`)}
          ${this.section("Options", html`
            <label class="chk">
              <input type="checkbox" .checked=${this.construction} @change=${() => (this.construction = !this.construction)} />
              <span>For <u>c</u>onstruction</span>
            </label>`)}
        </div>
        <div class="sb">
          <button aria-label="Scroll up"></button>
          <div class="thumb"></div>
          <button class="down" aria-label="Scroll down"></button>
        </div>
      </div>
      <div class="split"><span class="dot"></span></div>
    </aside>`;
  }

  private get sketchArea() {
    const pts = [[283.5, 271.5], [731.5, 271.5], [283.5, 546.5], [731.5, 546.5]];
    const circles = [[283, 271.5, 45], [732, 271.5, 44.5], [283, 546, 45.5], [732, 546.5, 46.5]];
    const rels: [number, number, boolean][] = [[507, 286, true], [297, 409, false], [746, 409, false], [507, 560, true]];
    return svg`
      ${circles.map(([x, y, r]) => svg`<circle cx=${x} cy=${y} r=${r} fill="none" stroke="#4fa3fb" stroke-width="2.8"/>`)}
      <path d="M731.5 271.5H283.5V546.5H731.5" fill="none" stroke="#0a0af5" stroke-width="2"/>
      <path d="M731.5 271v276" stroke="#ff8000" stroke-width="3"/>
      ${pts.map(([x, y]) => svg`<rect x=${x - 3} y=${y - 3} width="6" height="6" fill=${x > 700 ? "#e0904a" : "#6fa8e8"} stroke="#111"/>`)}
      <path d="M724 402l6 6M726 401l4 4M733 410l5 5M732 413l4 4" stroke="#111" stroke-dasharray="2 1"/>
      <rect x="728.5" y="405.5" width="6" height="6" fill="#ffe000" stroke="#111"/>
      ${rels.map(([x, y, h]) => svg`<rect x=${x - 6} y=${y - 6} width="12" height="12" fill="#0bd43c"/>
        <path d=${h ? `M${x - 5} ${y}h10` : `M${x} ${y - 5}v10`} stroke="#033" stroke-width="1.5"/>`)}
      <path d="M44 542h26" stroke="#7a0d0d" stroke-width="4"/><path d="M44 542h26" stroke="#f06a6a" stroke-width="2"/>
      <path d="M61 538l9 4-9 4z" fill="#cc1414"/>
      <path d="M40 546v22" stroke="#1616b4" stroke-width="4"/><path d="M40 546v20" stroke="#7676f0" stroke-width="2"/>
      <path d="M36 564h8l-4 9z" fill="#1414c8"/>
      <circle cx="40" cy="542" r="4.7" fill="#0c4a14"/>
      <text x="70" y="546" font-size="11" fill="#f21414">X</text>
      <text x="36" y="581" font-size="11" fill="#1414e8">Z</text>`;
  }

  private get viewport() {
    return html`<main class="view">
      <svg class="sketch" aria-label="Sketch2">${this.sketchArea}</svg>
      <svg class="corner" width="80" height="60" viewBox="0 0 80 60" aria-hidden="true">
        <path d="M21 3.5H2V18q0 9 9 9h10" fill="none" stroke="#96afc2" stroke-width="2" />
        <path d="M23 27l10-9v6q9-2 11-10 3 15-11 16v7z" transform="translate(-2 0)" fill="#aec9d8" stroke="#86a3b6" stroke-width="1.5" />
        <path d="M45 39l5-5 6 6 6-6 5 5-6 6 6 6-5 5-6-6-6 6-5-5 6-6z" fill="#cf9aa3" stroke="#c08a94" />
      </svg>
      <div class="hud">
        <div class="tree">${icon("partBlue")}Part1&nbsp; (Default&lt;&lt;Default&gt;...</div>
        <div class="row">${VIEW_TOOLS.map((x) => this.tool(x))}</div>
      </div>
      <span class="topname">*Top</span>
      <div class="task">
        ${["home", "library", "folder", "palette", "appearance", "sheet", "forum"].map(
          (i) => html`<button class=${i === "appearance" ? "on" : ""} aria-label=${i}>${icon(i)}</button>`
        )}
      </div>
      <div class="ctx">
        ${CONTEXT.map((r) => html`<div class="row">${r.map(([i, l]) => html`<button class=${i === "equal" ? "hot" : ""} aria-label=${l}>${icon(i)}</button>`)}</div>`)}
        <div class="tip" role="tooltip">Make Equal</div>
      </div>
    </main>`;
  }

  private wbtn(cls: string, label: string, glyph: unknown) {
    return html`<button class="wbtn ${cls}" aria-label=${label}>
      <svg width="14" height="12" viewBox="0 0 14 12" aria-hidden="true">${glyph}</svg>
    </button>`;
  }

  render() {
    const frame = svg`<path d="M2 .5h10v11H2z" fill="#fff" stroke="#445"/>`;
    return html`
      ${this.topBar}
      <div class="side">
        ${FEATURE_TOOLS.map((x) => (x ? this.tool(x) : html`<hr />`))}
        <hr class="after" />
      </div>
      <div class="desk">
        <div class="win">
          <div class="bar">
            ${icon("part")}<span class="name">Sketch2 of Part1 *</span>
            ${this.wbtn("", "Pane left", svg`${frame}<path d="M6.5 3L4.500 6l2 3M9 3v6" fill="none" stroke="#334" stroke-width="1.5"/>`)}
            ${this.wbtn("", "Pane right", svg`${frame}<path d="M7.5 3l2 3-2 3M5 3v6" fill="none" stroke="#334" stroke-width="1.5"/>`)}
            ${this.wbtn("join", "Minimize", svg`<path d="M2 6.5h10v3H2z" fill="#fff" stroke="#555"/>`)}
            ${this.wbtn("", "Maximize", svg`<path d="M2.5 2h9v8h-9z" fill="#fff" stroke="#445"/><path d="M5 5h4v2.500H5z" fill="#9db7d5" stroke="#445"/>`)}
            ${this.wbtn("x", "Close", svg`<path d="M3.5 2.5l7 7M10.5 2.5l-7 7" stroke="#633" stroke-width="4"/><path d="M3.5 2.5l7 7M10.5 2.5l-7 7" stroke="#fff" stroke-width="2.4"/>`)}
          </div>
          <div class="work">${this.propertyManager}${this.viewport}</div>
          <div class="btabs">
            <div class="nav">
              ${[["First", "M3 1v8M9 1L4 5l5 4z"], ["Previous", "M7 1L3 5l4 4z"], ["Next", "M3 1l4 4-4 4z"], ["Last", "M2 1l5 4-5 4zM8 1v8"]].map(
                ([l, d]) => html`<button aria-label=${l}><svg width="10" height="10" viewBox="0 0 10 10"><path d=${d} fill="#8a8a8a" stroke="#8a8a8a" /></svg></button>`
              )}
            </div>
            <button class="tab model">Model</button><button class="tab motion">Motion Study 1</button>
          </div>
        </div>
      </div>
      <div class="side r">
        ${SKETCH_TOOLS.map((x) => (x ? this.tool(x) : html`<hr />`))}
        <button class="more" aria-label="More tools">${icon("more")}</button>
        <hr class="last" />
      </div>
      <footer class="status">
        <span class="msg">Adds an equal relation to the selection(s)</span>
        <span class="len">Total Length: 334.8mm</span>
        <span class="def">Under Defined</span>
        <span class="ed">Editing Sketch2</span>
        <span class="lights">${icon("traffic")}</span>
        <span class="units">MMGS</span><span class="up"></span>
        ${icon("rebuild")}
      </footer>
      <div class="taskbar"></div>
    `;
  }
}
